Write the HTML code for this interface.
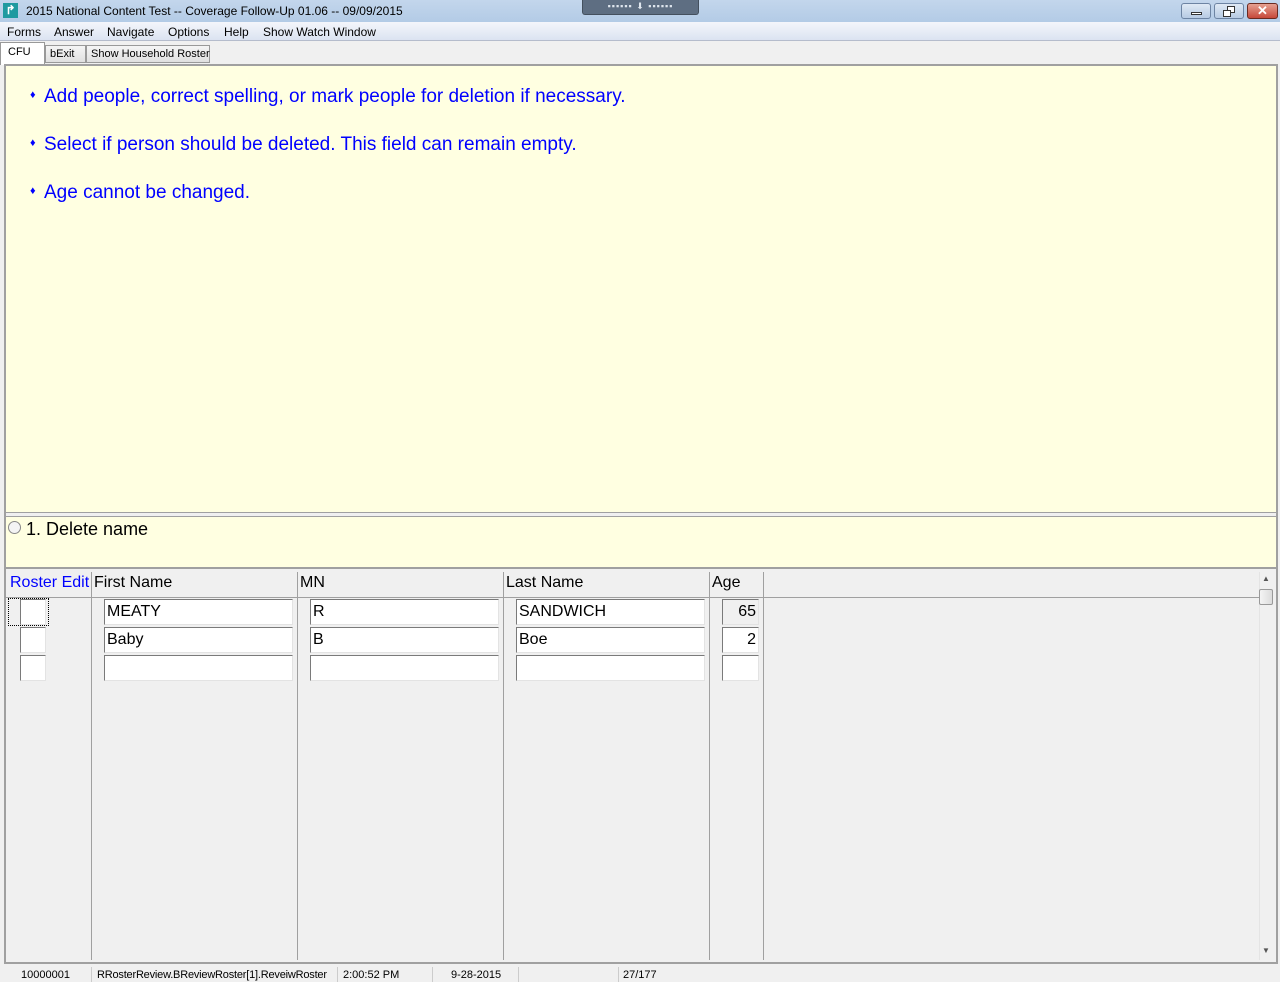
<!DOCTYPE html>
<html><head><style>
*{margin:0;padding:0;box-sizing:border-box}
body{width:1280px;height:982px;position:relative;background:#f0f0f0;font-family:"Liberation Sans",sans-serif;overflow:hidden}
.a{position:absolute}
.t{font-family:"Liberation Sans",sans-serif;font-size:12px;color:#000;white-space:nowrap}
.inp{position:absolute;background:#fff;border:1px solid #a0a0a0;border-top-color:#7a7a7a;border-left-color:#7a7a7a;border-right-color:#e3e3e3;border-bottom-color:#e3e3e3;font-size:16px;line-height:24px;padding-left:2px}
.b{position:absolute;left:44px;font-size:19px;color:#0000ff;white-space:nowrap}
.d{position:absolute;left:30px;font-size:11px;color:#0000ff}
.vl{position:absolute;top:572px;height:388px;width:1px;background:#a0a0a0}
.h{position:absolute;top:574px;font-size:16px}
</style></head><body>
<div class="a" style="left:0;top:0;width:1280px;height:22px;background:linear-gradient(#c3d6ec,#b3cbe6)"></div>
<div class="a" style="left:3px;top:3px;width:15px;height:15px;background:#1f9aa0;color:#fff;font-size:12px;line-height:15px;text-align:center;font-weight:bold">↱</div>
<div class="a t" style="left:26px;top:4px;font-size:12px">2015 National Content Test -- Coverage Follow-Up 01.06 -- 09/09/2015</div>
<div class="a" style="left:582px;top:0;width:117px;height:15px;background:#5e6e82;border:1px solid #44505e;border-top:none;border-radius:0 0 3px 3px;color:#dfe6ee;font-size:9px;text-align:center;line-height:12px;letter-spacing:1px">▪▪▪▪▪▪ ⬇ ▪▪▪▪▪▪</div>
<div class="a" style="left:1181px;top:3px;width:30px;height:16px;border:1px solid #6d84a3;border-radius:3px;background:linear-gradient(#dfe9f5,#b7cbe3)"><div class="a" style="left:9px;top:8px;width:11px;height:3px;background:#fff;border:1px solid #333"></div></div>
<div class="a" style="left:1214px;top:3px;width:30px;height:16px;border:1px solid #6d84a3;border-radius:3px;background:linear-gradient(#dfe9f5,#b7cbe3)"><div class="a" style="left:12px;top:2px;width:8px;height:7px;border:1px solid #333;background:#fff"></div><div class="a" style="left:8px;top:6px;width:8px;height:7px;border:1px solid #333;background:#fff"></div></div>
<div class="a" style="left:1247px;top:3px;width:31px;height:16px;border:1px solid #6b2a20;border-radius:3px;background:linear-gradient(#e5a091,#c7493a);color:#fff;font-weight:bold;font-size:13px;text-align:center;line-height:14px">✕</div>
<div class="a" style="left:0;top:22px;width:1280px;height:19px;background:linear-gradient(#f4f6fb,#dbe3f1);border-bottom:1px solid #b5bccc"></div>
<div class="a t" style="left:7px;top:25px">Forms</div><div class="a t" style="left:54px;top:25px">Answer</div><div class="a t" style="left:107px;top:25px">Navigate</div><div class="a t" style="left:168px;top:25px">Options</div><div class="a t" style="left:224px;top:25px">Help</div><div class="a t" style="left:263px;top:25px">Show Watch Window</div>
<div class="a" style="left:45px;top:45px;width:41px;height:18px;border:1px solid #999;background:linear-gradient(#f5f5f5,#e0e0e0)"></div>
<div class="a" style="left:86px;top:45px;width:124px;height:18px;border:1px solid #999;background:linear-gradient(#f5f5f5,#e0e0e0)"></div>
<div class="a" style="left:0;top:42px;width:45px;height:23px;border:1px solid #999;border-bottom:none;background:#fff"></div>
<div class="a t" style="left:8px;top:46px;font-size:11px">CFU</div><div class="a t" style="left:50px;top:48px;font-size:11px">bExit</div><div class="a t" style="left:91px;top:48px;font-size:11px">Show Household Roster</div>
<div class="a" style="left:4px;top:64px;width:1274px;height:900px;border:2px solid #a0a0a0;background:#f0f0f0"></div>
<div class="a" style="left:6px;top:66px;width:1270px;height:447px;background:#ffffe1;border-bottom:1px solid #a0a0a0"></div>
<div class="d" style="top:89px">♦</div><div class="b" style="top:86px">Add people, correct spelling, or mark people for deletion if necessary.</div>
<div class="d" style="top:137px">♦</div><div class="b" style="top:134px">Select if person should be deleted. This field can remain empty.</div>
<div class="d" style="top:185px">♦</div><div class="b" style="top:182px">Age cannot be changed.</div>
<div class="a" style="left:6px;top:514px;width:1270px;height:3px;background:#f0f0f0;border-bottom:1px solid #a0a0a0"></div>
<div class="a" style="left:6px;top:517px;width:1270px;height:52px;background:#ffffe1;border-bottom:2px solid #a0a0a0"></div>
<div class="a" style="left:8px;top:521px;width:13px;height:13px;border-radius:50%;border:1px solid #888;background:#f4f4f4"></div>
<div class="a" style="left:26px;top:519px;font-size:18px">1. Delete name</div>
<div class="a" style="left:6px;top:597px;width:1253px;height:1px;background:#a0a0a0"></div>
<div class="vl" style="left:91px"></div><div class="vl" style="left:297px"></div><div class="vl" style="left:503px"></div><div class="vl" style="left:709px"></div><div class="vl" style="left:763px"></div>
<div class="h" style="left:10px;color:#0000ff">Roster Edit</div><div class="h" style="left:94px">First Name</div><div class="h" style="left:300px">MN</div><div class="h" style="left:506px">Last Name</div><div class="h" style="left:712px">Age</div>
<div class="a" style="left:8px;top:598px;width:41px;height:28px;border:1px dotted #000"></div>
<div class="inp" style="left:20px;top:599px;width:26px;height:26px"></div><div class="inp" style="left:20px;top:627px;width:26px;height:26px"></div><div class="inp" style="left:20px;top:655px;width:26px;height:26px"></div>
<div class="inp" style="left:104px;top:599px;width:189px;height:26px">MEATY</div><div class="inp" style="left:104px;top:627px;width:189px;height:26px">Baby</div><div class="inp" style="left:104px;top:655px;width:189px;height:26px"></div>
<div class="inp" style="left:310px;top:599px;width:189px;height:26px">R</div><div class="inp" style="left:310px;top:627px;width:189px;height:26px">B</div><div class="inp" style="left:310px;top:655px;width:189px;height:26px"></div>
<div class="inp" style="left:516px;top:599px;width:189px;height:26px">SANDWICH</div><div class="inp" style="left:516px;top:627px;width:189px;height:26px">Boe</div><div class="inp" style="left:516px;top:655px;width:189px;height:26px"></div>
<div class="inp" style="left:722px;top:599px;width:37px;height:26px;text-align:right;padding-right:2px;background:#f0f0f0">65</div><div class="inp" style="left:722px;top:627px;width:37px;height:26px;text-align:right;padding-right:2px">2</div><div class="inp" style="left:722px;top:655px;width:37px;height:26px"></div>
<div class="a" style="left:1259px;top:572px;width:17px;height:388px;background:#f0f0f0;border-left:1px solid #e4e4e4"></div>
<div class="a" style="left:1262px;top:574px;font-size:8px;color:#555">▲</div>
<div class="a" style="left:1262px;top:946px;font-size:8px;color:#555">▼</div>
<div class="a" style="left:1259px;top:589px;width:14px;height:16px;border:1px solid #999;border-radius:2px;background:linear-gradient(90deg,#f4f4f4,#dcdcdc)"></div>
<div class="a" style="left:0;top:966px;width:1280px;height:16px;background:#f0f0f0"></div>
<div class="a" style="left:91px;top:967px;width:1px;height:15px;background:#ccc"></div><div class="a" style="left:337px;top:967px;width:1px;height:15px;background:#ccc"></div><div class="a" style="left:432px;top:967px;width:1px;height:15px;background:#ccc"></div><div class="a" style="left:518px;top:967px;width:1px;height:15px;background:#ccc"></div><div class="a" style="left:618px;top:967px;width:1px;height:15px;background:#ccc"></div>
<div class="a t" style="left:21px;top:969px;font-size:11px">10000001</div><div class="a t" style="left:97px;top:969px;font-size:11px;letter-spacing:-0.2px">RRosterReview.BReviewRoster[1].ReveiwRoster</div><div class="a t" style="left:343px;top:969px;font-size:11px">2:00:52 PM</div><div class="a t" style="left:451px;top:969px;font-size:11px">9-28-2015</div><div class="a t" style="left:623px;top:969px;font-size:11px">27/177</div>
</body></html>
